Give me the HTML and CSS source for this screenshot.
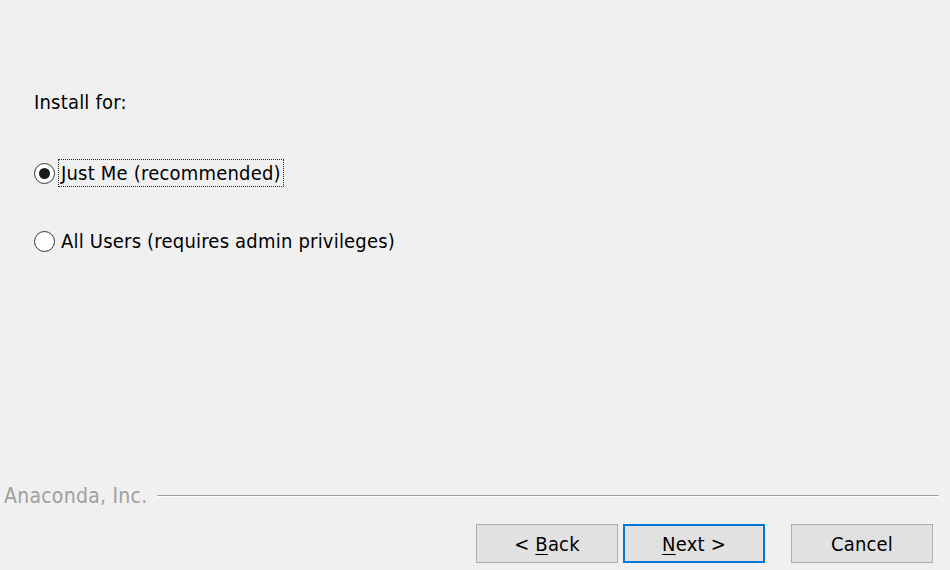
FILE: index.html
```html
<!DOCTYPE html>
<html>
<head>
<meta charset="utf-8">
<link rel="stylesheet" href="styles.css">
</head>
<body>
<div class="dialog">
  <div class="content">
    <div class="heading">Install for:</div>
    <div class="options">
      <label class="option">
        <span class="radio checked"><span class="dot"></span></span>
        <span class="label focus">Just Me (recommended)</span>
      </label>
      <label class="option">
        <span class="radio"></span>
        <span class="label">All Users (requires admin privileges)</span>
      </label>
    </div>
  </div>
  <div class="brand">
    <span class="brand-text">Anaconda, Inc.</span>
    <span class="rule"></span>
  </div>
  <div class="buttons">
    <button class="btn">&lt; <u>B</u>ack</button>
    <button class="btn default"><u>N</u>ext &gt;</button>
    <button class="btn cancel">Cancel</button>
  </div>
</div>
</body>
</html>
```
FILE: styles.css
```css
html, body {
  margin: 0;
  padding: 0;
  background: #f0f0f0;
}
.dialog {
  width: 950px;
  height: 570px;
  display: flex;
  flex-direction: column;
  font-family: "DejaVu Sans Condensed", "DejaVu Sans", sans-serif;
  font-size: 20px;
  letter-spacing: 0.2px;
  color: #000;
}
.content {
  flex: 1;
  padding: 89px 0 0 34px;
}
.heading {
  line-height: 26px;
}
.options {
  display: flex;
  flex-direction: column;
  gap: 40px;
  margin-top: 44px;
}
.option {
  display: flex;
  align-items: center;
  height: 28px;
}
.radio {
  width: 19px;
  height: 19px;
  border: 1.5px solid #333;
  border-radius: 50%;
  background: #fff;
  display: flex;
  align-items: center;
  justify-content: center;
  flex: none;
}
.dot {
  width: 11px;
  height: 11px;
  border-radius: 50%;
  background: #1a1a1a;
}
.label {
  margin-left: 3px;
  padding: 0 2px;
  line-height: 26px;
  border: 1px solid transparent;
}
.label.focus {
  border: 1px dotted #222;
}
.brand {
  display: flex;
  align-items: center;
  padding: 0 11px 0 4px;
  height: 26px;
}
.brand-text {
  color: #a0a0a0;
  font-size: 21px;
  letter-spacing: 0.25px;
}
.rule {
  flex: 1;
  margin-left: 10px;
  height: 1px;
  background: #a0a0a0;
  border-bottom: 1px solid #fff;
}
.buttons {
  display: flex;
  justify-content: flex-end;
  padding: 15px 17px 7px 0;
}
.btn {
  width: 142px;
  height: 39px;
  margin: 0;
  background: #e1e1e1;
  border: 1px solid #adadad;
  font-family: inherit;
  font-size: 20px;
  letter-spacing: 0.2px;
  color: #000;
  padding: 0;
}
.btn u {
  text-decoration-thickness: 1px;
  text-underline-offset: 3px;
}
.btn.default {
  margin-left: 5px;
  border: 2px solid #0078d7;
}
.btn.cancel {
  margin-left: 26px;
}
```
